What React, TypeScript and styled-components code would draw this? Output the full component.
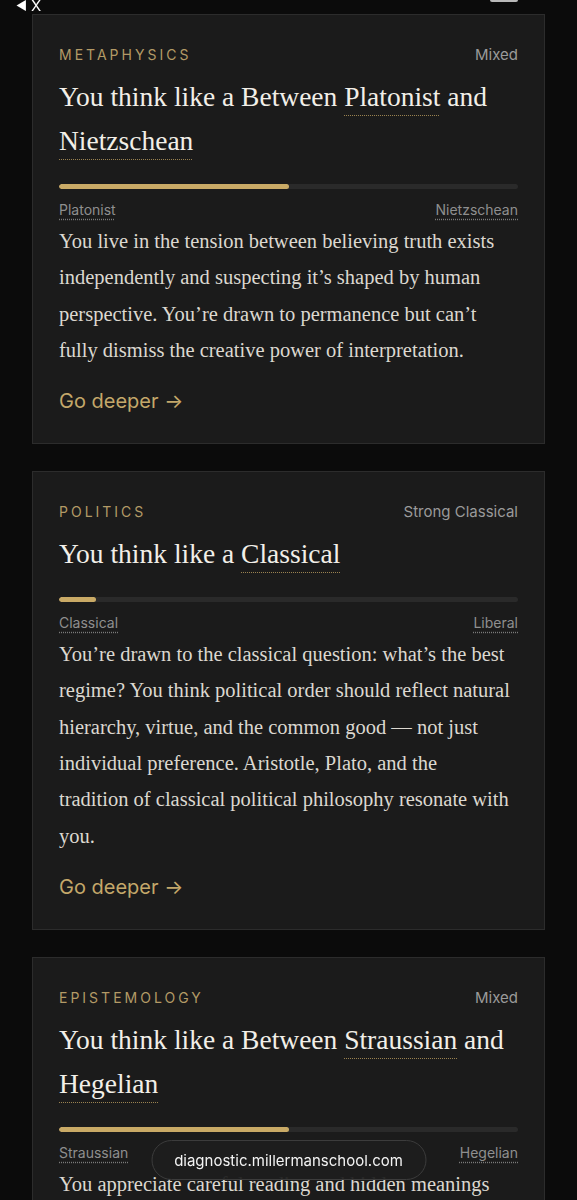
import React from 'react';
import styled, { createGlobalStyle } from 'styled-components';

const GlobalStyle = createGlobalStyle`
  html, body {
    margin: 0;
    padding: 0;
    background: #0b0b0b;
  }
  * {
    box-sizing: border-box;
  }
`;

const Page = styled.main`
  display: flex;
  flex-direction: column;
  gap: 27px;
  padding: 14px 32px 80px;
  background: #0b0b0b;
  min-height: 100vh;
`;

const Card = styled.section`
  background: #1b1b1b;
  border: 1px solid #2c2c2c;
  padding: 30px 26px 30px;
  display: flex;
  flex-direction: column;
`;

const Header = styled.div`
  display: flex;
  justify-content: space-between;
  align-items: center;
  font-family: Inter, "Liberation Sans", sans-serif;
  line-height: 20px;
`;

const Category = styled.span`
  color: #b39a66;
  font-size: 14px;
  letter-spacing: 3px;
  text-transform: uppercase;
`;

const Strength = styled.span`
  color: #9a9a9a;
  font-size: 15px;
`;

const Title = styled.h2`
  margin: 10px 0 0;
  font-family: "Liberation Serif", "Times New Roman", serif;
  font-weight: 400;
  font-size: 27.5px;
  line-height: 44px;
  color: #f2efe8;
`;

const Term = styled.span`
  text-decoration: underline dotted;
  text-decoration-color: #9a8250;
  text-decoration-thickness: 1px;
  text-underline-offset: 9px;
`;

const Track = styled.div`
  margin-top: 21px;
  height: 5px;
  border-radius: 3px;
  background: #2a2a2a;
  overflow: hidden;
`;

const Fill = styled.div`
  height: 100%;
  border-radius: 3px;
  background: #c9aa66;
`;

const Poles = styled.div`
  margin-top: 11px;
  display: flex;
  justify-content: space-between;
  font-family: Inter, "Liberation Sans", sans-serif;
  font-size: 14px;
  line-height: 20px;
  color: #8f8f8f;
`;

const Pole = styled.span`
  text-decoration: underline dotted;
  text-decoration-color: #7a7a7a;
  text-underline-offset: 4px;
`;

const Body = styled.p`
  margin: 3px 0 0;
  font-family: "Liberation Serif", "Times New Roman", serif;
  font-size: 20.5px;
  line-height: 36.3px;
  color: #dcd8d0;
`;

const Deeper = styled.a`
  margin-top: 21px;
  font-family: Inter, "Liberation Sans", sans-serif;
  font-size: 20px;
  line-height: 24px;
  color: #c4a86a;
  text-decoration: none;
`;

const BackHint = styled.div`
  position: fixed;
  top: -1px;
  left: 16px;
  font-family: Inter, "Liberation Sans", sans-serif;
  font-size: 15px;
  line-height: 14px;
  color: #ffffff;
  display: flex;
  align-items: center;
  gap: 4px;
`;

const Arrow = styled.span`
  font-size: 12px;
`;

const TopNub = styled.div`
  position: fixed;
  top: 0;
  left: 490px;
  width: 28px;
  height: 2px;
  border-radius: 0 0 2px 2px;
  background: #b9b9b9;
`;

const UrlPill = styled.div`
  position: fixed;
  bottom: 20px;
  left: 50%;
  transform: translateX(-50%);
  width: 275px;
  height: 40px;
  border-radius: 20px;
  border: 1px solid #3c3c3c;
  background: rgba(30, 30, 30, 0.94);
  display: flex;
  align-items: center;
  justify-content: center;
  font-family: Inter, "Liberation Sans", sans-serif;
  font-size: 15px;
  color: #f4f4f4;
`;

type Result = {
  category: string;
  strength: string;
  title: React.ReactNode;
  fill: number;
  left: string;
  right: string;
  body: React.ReactNode;
};

const results: Result[] = [
  {
    category: 'Metaphysics',
    strength: 'Mixed',
    title: (
      <>
        You think like a Between <Term>Platonist</Term> and <Term>Nietzschean</Term>
      </>
    ),
    fill: 50,
    left: 'Platonist',
    right: 'Nietzschean',
    body:
      'You live in the tension between believing truth exists independently and suspecting it\u2019s shaped by human perspective. You\u2019re drawn to permanence but can\u2019t fully dismiss the creative power of interpretation.',
  },
  {
    category: 'Politics',
    strength: 'Strong Classical',
    title: (
      <>
        You think like a <Term>Classical</Term>
      </>
    ),
    fill: 8,
    left: 'Classical',
    right: 'Liberal',
    body: (
      <>
        You’re drawn to the classical question: what’s the best regime? You think political
        order should reflect natural hierarchy, virtue, and the common good — not just
        individual preference. Aristotle, Plato, and the
        <br />
        tradition of classical political philosophy resonate with you.
      </>
    ),
  },
  {
    category: 'Epistemology',
    strength: 'Mixed',
    title: (
      <>
        You think like a Between <Term>Straussian</Term> and <Term>Hegelian</Term>
      </>
    ),
    fill: 50,
    left: 'Straussian',
    right: 'Hegelian',
    body:
      'You appreciate careful reading and hidden meanings beneath the surface of great texts, yet you also see ideas unfolding through history.',
  },
];

const App: React.FC = () => (
  <>
    <GlobalStyle />
    <BackHint>
      <Arrow>◀</Arrow>X
    </BackHint>
    <TopNub />
    <Page>
      {results.map((r) => (
        <Card key={r.category}>
          <Header>
            <Category>{r.category}</Category>
            <Strength>{r.strength}</Strength>
          </Header>
          <Title>{r.title}</Title>
          <Track>
            <Fill style={{ width: `${r.fill}%` }} />
          </Track>
          <Poles>
            <Pole>{r.left}</Pole>
            <Pole>{r.right}</Pole>
          </Poles>
          <Body>{r.body}</Body>
          <Deeper href="#">Go deeper →</Deeper>
        </Card>
      ))}
    </Page>
    <UrlPill>diagnostic.millermanschool.com</UrlPill>
  </>
);

export default App;
